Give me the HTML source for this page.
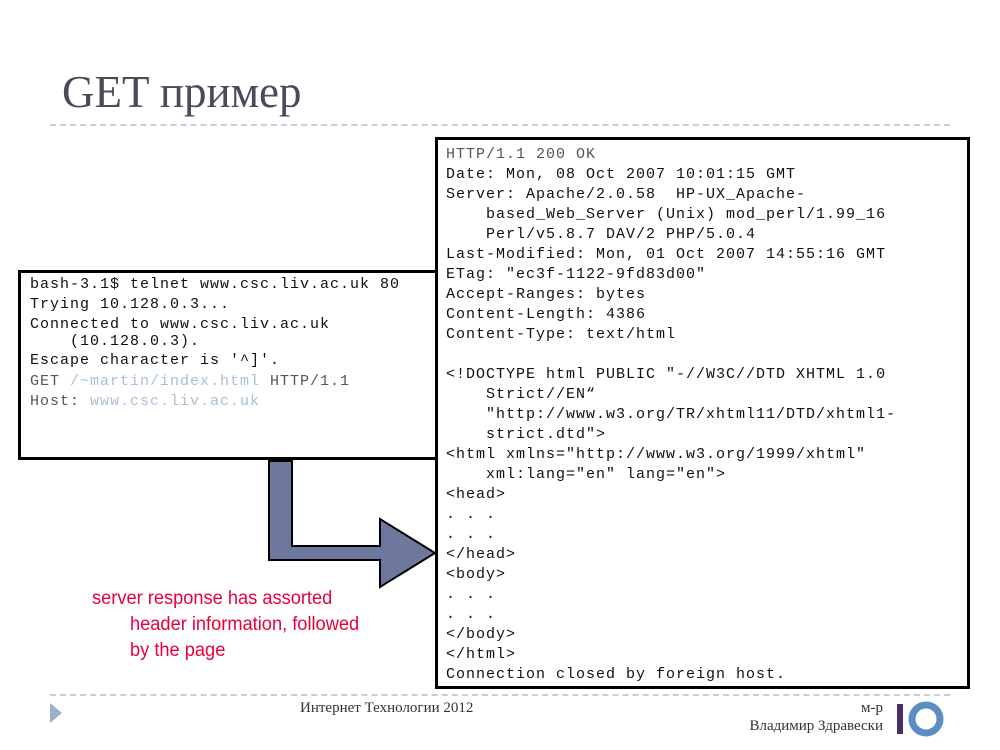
<!DOCTYPE html>
<html><head><meta charset="utf-8">
<style>
body{margin:0;width:1000px;height:750px;background:#fff;position:relative;overflow:hidden}
.t{position:absolute;left:62px;top:66px;font-family:"Liberation Serif","DejaVu Serif",serif;font-size:45px;color:#4a4a58}
.dash{position:absolute;left:50px;width:900px;border-top:2px dashed #c0d0e0;height:0}
.box{position:absolute;border:3px solid #000;background:#fff;box-sizing:border-box}
.m{position:absolute;font-family:"Liberation Mono",monospace;font-size:15px;letter-spacing:1px;line-height:20px;white-space:pre;color:#111}
.g{color:#555}.b{color:#a8bfd8}
.red{position:absolute;font-family:"Liberation Sans",sans-serif;font-size:19px;color:#e8003c;transform:scaleX(0.96);transform-origin:left;white-space:nowrap}
.f{position:absolute;font-family:"Liberation Serif",serif;font-size:15px;color:#333;white-space:nowrap}
</style></head><body>
<div class="t">GET пример</div>
<div class="dash" style="top:124px"></div>

<div class="box" style="left:18px;top:270px;width:420px;height:190px"></div>
<div class="m" style="left:30px;top:275px">bash-3.1$ telnet www.csc.liv.ac.uk 80</div>
<div class="m" style="left:30px;top:295px">Trying 10.128.0.3...</div>
<div class="m" style="left:30px;top:315px">Connected to www.csc.liv.ac.uk</div>
<div class="m" style="left:70px;top:332px">(10.128.0.3).</div>
<div class="m" style="left:30px;top:351px">Escape character is '^]'.</div>
<div class="m g" style="left:30px;top:372px">GET <span class="b">/~martin/index.html</span> HTTP/1.1</div>
<div class="m g" style="left:30px;top:392px">Host: <span class="b">www.csc.liv.ac.uk</span></div>

<div class="box" style="left:435px;top:137px;width:535px;height:552px"></div>
<div class="m" style="left:446px;top:145px"><span class="g">HTTP/1.1 200 OK</span>
Date: Mon, 08 Oct 2007 10:01:15 GMT
Server: Apache/2.0.58  HP-UX_Apache-
    based_Web_Server (Unix) mod_perl/1.99_16
    Perl/v5.8.7 DAV/2 PHP/5.0.4
Last-Modified: Mon, 01 Oct 2007 14:55:16 GMT
ETag: "ec3f-1122-9fd83d00"
Accept-Ranges: bytes
Content-Length: 4386
Content-Type: text/html

&lt;!DOCTYPE html PUBLIC "-//W3C//DTD XHTML 1.0
    Strict//EN“
    "http://www.w3.org/TR/xhtml11/DTD/xhtml1-
    strict.dtd"&gt;
&lt;html xmlns="http://www.w3.org/1999/xhtml"
    xml:lang="en" lang="en"&gt;
&lt;head&gt;
. . .
. . .
&lt;/head&gt;
&lt;body&gt;
. . .
. . .
&lt;/body&gt;
&lt;/html&gt;
Connection closed by foreign host.</div>

<svg style="position:absolute;left:0;top:0" width="1000" height="750">
<polygon points="269,461 292,461 292,546 380,546 380,519 435,553 380,587 380,560 269,560" fill="#6e779e" stroke="#000" stroke-width="2"/>
<polygon points="50,703 62,713 50,723" fill="#9ab0cc"/>
<rect x="897" y="704" width="6" height="30" fill="#4a2f60"/>
<circle cx="926" cy="719" r="14" fill="none" stroke="#5b8fc4" stroke-width="7"/>
</svg>

<div class="red" style="left:92px;top:588px">server response has assorted</div>
<div class="red" style="left:130px;top:614px">header information, followed</div>
<div class="red" style="left:130px;top:640px">by the page</div>

<div class="dash" style="top:694px"></div>
<div class="f" style="left:300px;top:700px">Интернет Технологии 2012</div>
<div class="f" style="right:117px;top:700px">м-р</div>
<div class="f" style="right:117px;top:718px">Владимир Здравески</div>
</body></html>
